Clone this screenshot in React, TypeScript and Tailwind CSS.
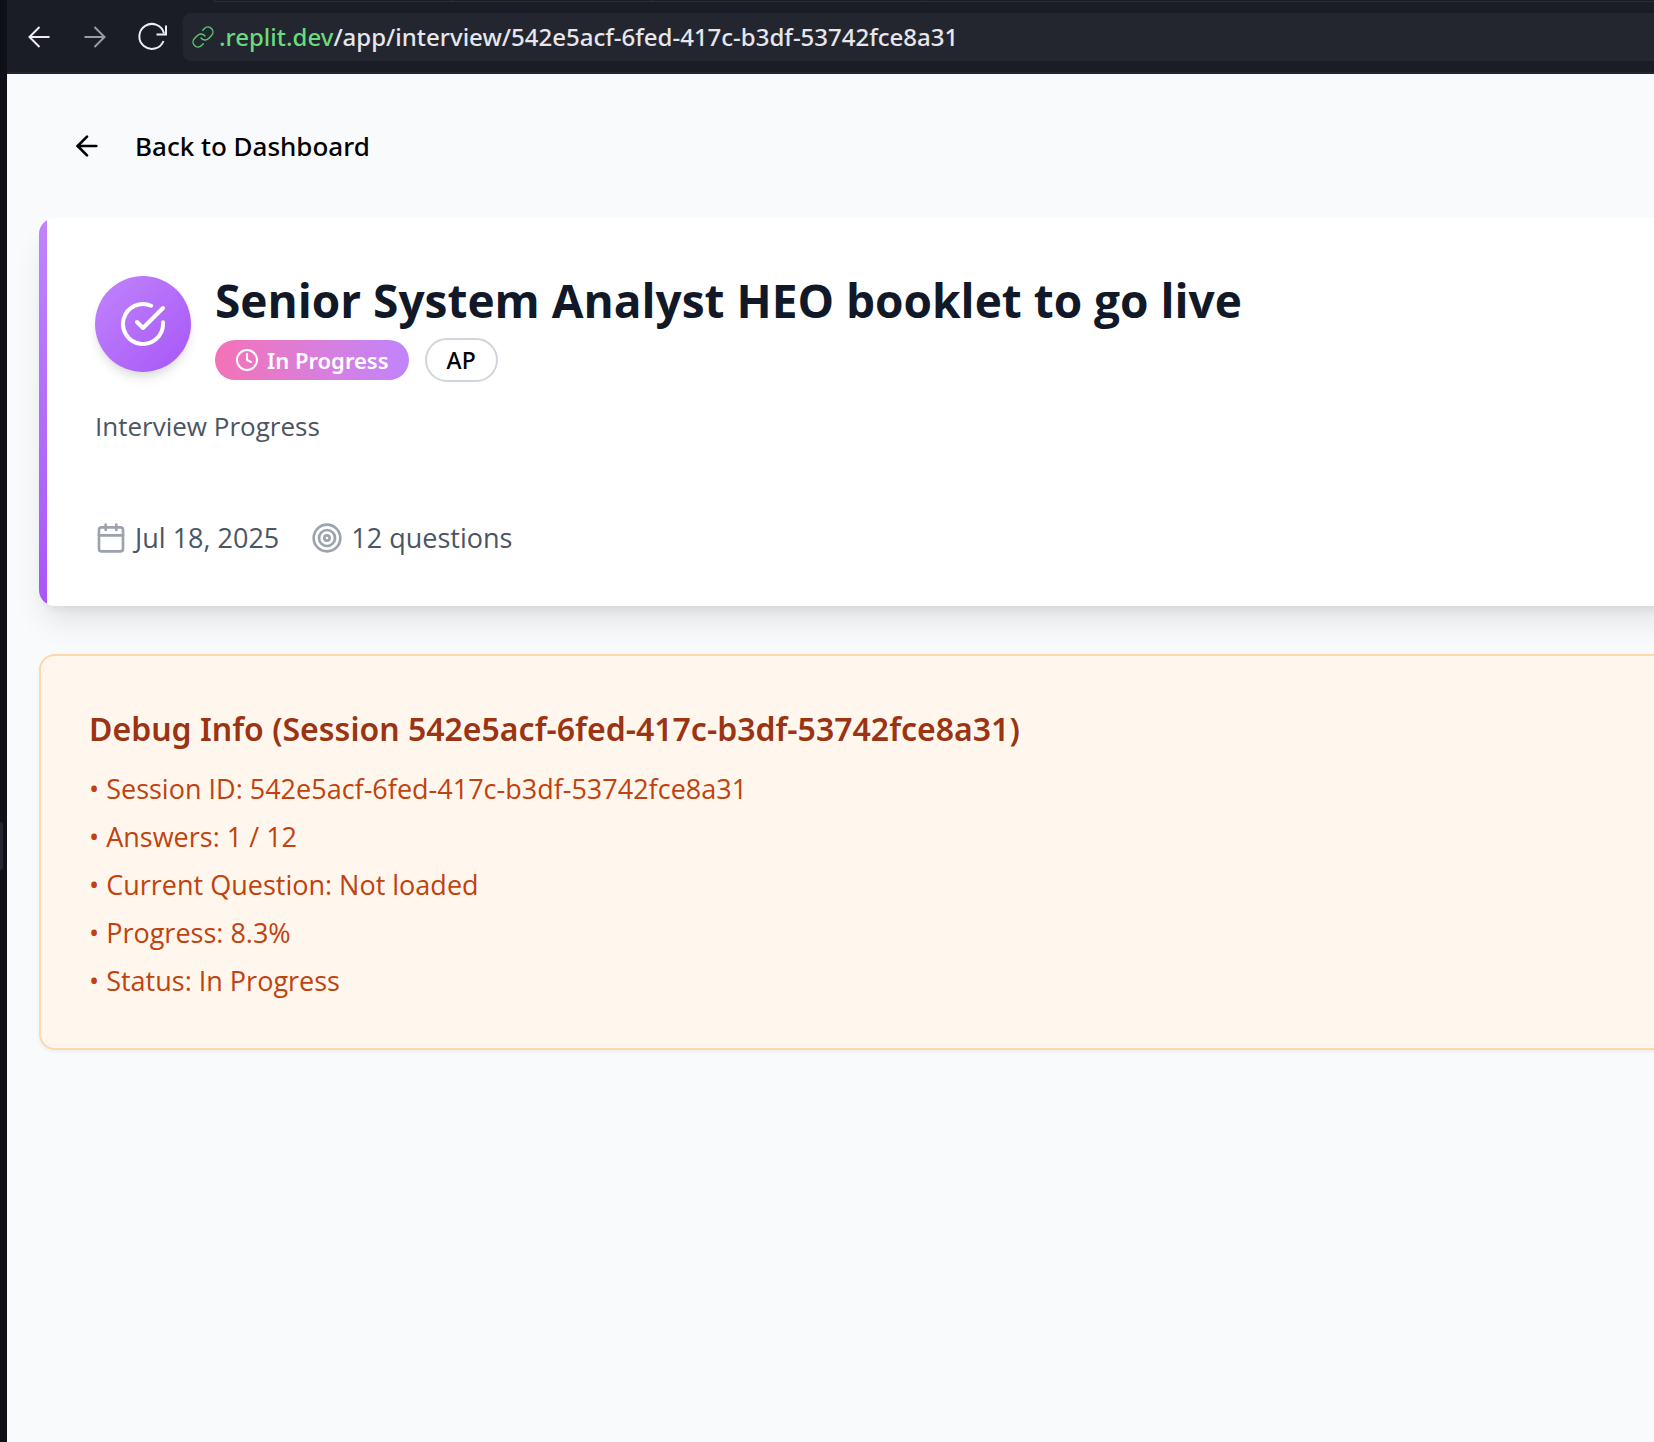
import React from "react";

type IconProps = { className?: string };

function StrokeIcon({ className, width = 2, children }: IconProps & { width?: number; children: React.ReactNode }) {
  return (
    <svg
      viewBox="0 0 24 24"
      fill="none"
      stroke="currentColor"
      strokeWidth={width}
      strokeLinecap="round"
      strokeLinejoin="round"
      aria-hidden="true"
      className={className}
    >
      {children}
    </svg>
  );
}

const ArrowLeft = ({ className }: IconProps) => (
  <StrokeIcon className={className}>
    <path d="m12 19-7-7 7-7" />
    <path d="M19 12H5" />
  </StrokeIcon>
);

const CheckCircle = ({ className }: IconProps) => (
  <StrokeIcon className={className}>
    <path d="M22 11.08V12a10 10 0 1 1-5.93-9.14" />
    <path d="m9 11 3 3L22 4" />
  </StrokeIcon>
);

const Clock = ({ className }: IconProps) => (
  <StrokeIcon className={className}>
    <circle cx="12" cy="12" r="10" />
    <path d="M12 6v6l4 2" />
  </StrokeIcon>
);

const Calendar = ({ className }: IconProps) => (
  <StrokeIcon className={className}>
    <path d="M8 2v4" />
    <path d="M16 2v4" />
    <rect width="18" height="18" x="3" y="4" rx="2" />
    <path d="M3 10h18" />
  </StrokeIcon>
);

const Target = ({ className }: IconProps) => (
  <StrokeIcon className={className}>
    <circle cx="12" cy="12" r="10" />
    <circle cx="12" cy="12" r="6" />
    <circle cx="12" cy="12" r="2" />
  </StrokeIcon>
);

const LinkIcon = ({ className }: IconProps) => (
  <StrokeIcon className={className} width={1.4}>
    <path d="M10 13a5 5 0 0 0 7.54.54l3-3a5 5 0 0 0-7.07-7.07l-1.72 1.71" />
    <path d="M14 11a5 5 0 0 0-7.54-.54l-3 3a5 5 0 0 0 7.07 7.07l1.71-1.71" />
  </StrokeIcon>
);

/* Browser toolbar glyphs, drawn on a 32px grid */
function BarIcon({ children }: { children: React.ReactNode }) {
  return (
    <svg viewBox="0 0 32 32" fill="none" stroke="currentColor" strokeWidth="2" aria-hidden="true" className="size-8">
      {children}
    </svg>
  );
}

function Toolbar() {
  return (
    <header className="flex flex-col border-b-2 border-[#24262f] bg-[#1b1d26]">
      <div className="flex h-[2px] pl-[207px]">
        <div className="w-[238px] border-b border-l border-[#2a2c37]" />
        <div className="w-[199px] border-b border-l border-[#2a2c37]" />
        <div className="w-[271px] border-b border-l border-[#2a2c37]" />
        <div className="grow border-b border-l border-[#2a2c37]" />
      </div>
      <div className="flex items-center pt-[11px] pb-[11px]">
        <nav className="flex items-center gap-6 px-4 text-[#ededf3]">
          <button type="button" aria-label="Back">
            <BarIcon>
              <path d="M16.5 6l-10 10 10 10M6.5 16h20" />
            </BarIcon>
          </button>
          <button type="button" aria-label="Forward" className="text-[#9a9ca6]">
            <BarIcon>
              <path d="M15.5 6l10 10-10 10M25.5 16h-20" />
            </BarIcon>
          </button>
          <button type="button" aria-label="Reload">
            <BarIcon>
              <path d="M29 12.5A12.500 12.500 0 1 0 28.500 20" />
              <path d="M31 4.500v9h-9.500" />
            </BarIcon>
          </button>
        </nav>
        <div className="flex h-12 grow items-center gap-1 rounded-l-lg bg-[#24262f] pl-2">
          <LinkIcon className="size-6 text-[#5bc873]" />
          <p className="font-['Noto_Sans',sans-serif] text-2xl font-medium whitespace-nowrap text-[#e6e6ec]">
            <span className="text-[#68db7d]">.replit.dev</span>/app/interview/542e5acf-6fed-417c-b3df-53742fce8a31
          </p>
        </div>
      </div>
    </header>
  );
}

function InterviewCard() {
  return (
    <section className="-mr-16 flex overflow-hidden rounded-2xl bg-white shadow-[0_20px_30px_-6px_rgba(0,0,0,0.1),0_8px_12px_-8px_rgba(0,0,0,0.1)]">
      <div className="w-2 shrink-0 bg-linear-to-b from-[#c084fc] to-[#a855f7]" />
      <div className="flex grow flex-col p-12">
        <div className="flex items-center gap-6">
          <div className="flex size-24 shrink-0 items-center justify-center rounded-full bg-linear-to-br from-[#c084fc] to-[#a855f7] text-white shadow-[0_8px_12px_-2px_rgba(0,0,0,0.1),0_4px_8px_-4px_rgba(0,0,0,0.1)]">
            <CheckCircle className="size-12" />
          </div>
          <div>
            <h1 className="text-[46px] leading-[68px] font-bold text-[#111827]">
              Senior System Analyst HEO booklet to go live
            </h1>
            <div className="mt-1 flex items-center gap-4 leading-8">
              <span className="flex h-10 items-center gap-2 rounded-full bg-linear-to-r from-[#f472b6] to-[#c084fc] px-5 font-['Noto_Sans',sans-serif] text-[22px] font-semibold text-white">
                <Clock className="size-6" />
                In Progress
              </span>
              <span className="flex h-11 items-center rounded-full border-2 border-[#d1d5db] px-5 font-['Noto_Sans',sans-serif] text-[23px] font-medium text-black">
                AP
              </span>
            </div>
          </div>
        </div>
        <p className="mt-6 text-[26px] leading-10 text-[#4b5563]">Interview Progress</p>
        <div className="mt-[72px] flex items-center gap-8 text-[27px] leading-10 text-[#4b5563]">
          <span className="flex items-center gap-2">
            <Calendar className="size-8 text-[#9ca3af]" />
            Jul 18, 2025
          </span>
          <span className="flex items-center gap-2">
            <Target className="size-8 text-[#9ca3af]" />
            12 questions
          </span>
        </div>
      </div>
    </section>
  );
}

const debugLines = [
  "Session ID: 542e5acf-6fed-417c-b3df-53742fce8a31",
  "Answers: 1 / 12",
  "Current Question: Not loaded",
  "Progress: 8.3%",
  "Status: In Progress",
];

function DebugCard() {
  return (
    <section className="-mr-16 rounded-2xl border-2 border-[#fed7aa] bg-[#fff7ed] px-12 pt-[49px] pb-[47px] shadow-[0_2px_4px_0_rgba(0,0,0,0.05)]">
      <h2 className="font-['Noto_Sans',sans-serif] text-[32px] leading-[48px] font-semibold text-[#9a3412]">
        Debug Info (Session 542e5acf-6fed-417c-b3df-53742fce8a31)
      </h2>
      <div className="mt-4 flex flex-col gap-2 text-[27px] leading-10 text-[#c2410c]">
        {debugLines.map((line) => (
          <p key={line}>• {line}</p>
        ))}
      </div>
    </section>
  );
}

export default function App() {
  return (
    <div className="flex min-h-screen bg-[#0e0f17] font-['Open_Sans',sans-serif]">
      <aside className="flex w-[7px] shrink-0 flex-col justify-center pt-[250px]">
        <div className="h-12 w-[3px] rounded-r-sm bg-[#24262f]" />
      </aside>
      <div className="flex min-w-0 grow flex-col overflow-hidden">
        <Toolbar />
        <main className="flex grow flex-col bg-[#f9fafc] p-8">
          <button
            type="button"
            className="flex h-20 items-center gap-8 self-start px-8 font-['Noto_Sans',sans-serif] text-[26px] leading-10 font-medium text-black"
          >
            <ArrowLeft className="size-8" />
            Back to Dashboard
          </button>
          <div className="mt-8 flex flex-col gap-12">
            <InterviewCard />
            <DebugCard />
          </div>
        </main>
      </div>
    </div>
  );
}
